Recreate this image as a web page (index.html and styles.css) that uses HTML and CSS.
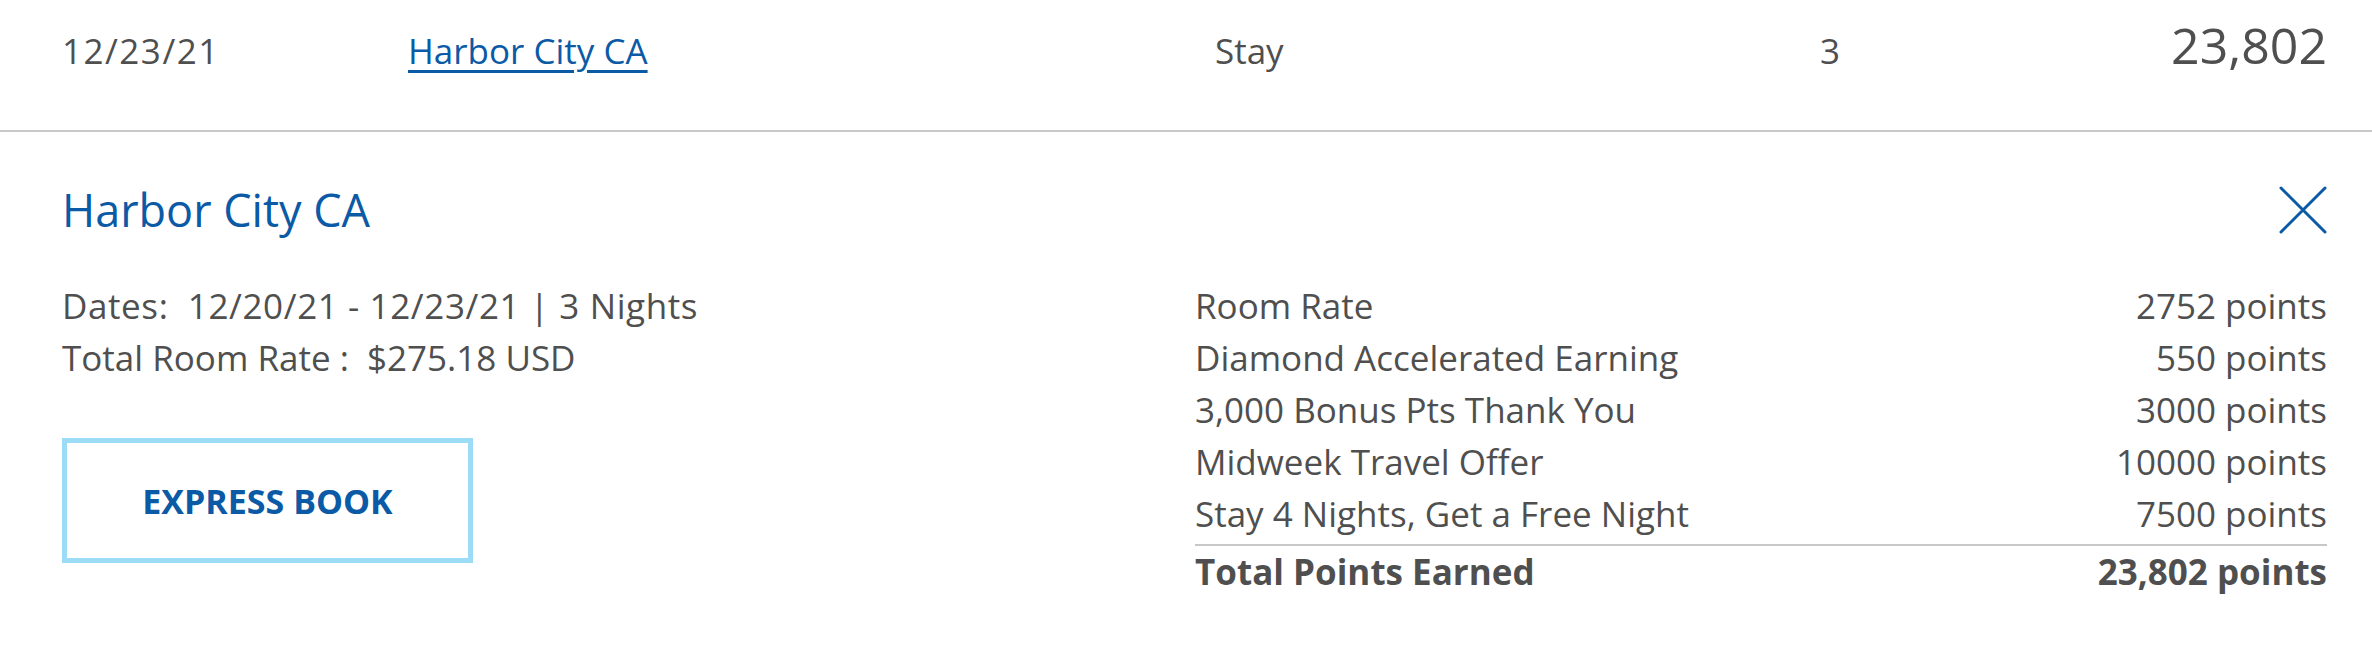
FILE: index.html
```html
<!DOCTYPE html>
<html lang="en">
<head>
    <meta charset="UTF-8">
    <meta name="viewport" content="width=device-width, initial-scale=1.0">
    <title>Stay Activity</title>
    <link rel="stylesheet" href="styles.css">
</head>
<body>
    <div class="activity">
        <div class="activity-row">
            <span class="col-date">12/23/21</span>
            <span class="col-location"><a href="#">Harbor City CA</a></span>
            <span class="col-type">Stay</span>
            <span class="col-nights">3</span>
            <span class="col-points">23,802</span>
        </div>

        <div class="activity-detail">
            <div class="detail-header">
                <h2 class="detail-title">Harbor City CA</h2>
                <button class="close-btn" aria-label="Close">
                    <svg width="48" height="48" viewBox="0 0 48 48">
                        <path d="M2 2 L46 46 M46 2 L2 46" stroke="currentColor" stroke-width="3" stroke-linecap="round" fill="none"/>
                    </svg>
                </button>
            </div>

            <div class="detail-body">
                <div class="stay-info">
                    <p>Dates:&nbsp; 12/20/21 - 12/23/21 | 3 Nights</p>
                    <p>Total Room Rate :&nbsp; $275.18 USD</p>
                    <a class="express-book" href="#">EXPRESS BOOK</a>
                </div>

                <div class="points-breakdown">
                    <div class="points-line">
                        <span>Room Rate</span>
                        <span>2752 points</span>
                    </div>
                    <div class="points-line">
                        <span>Diamond Accelerated Earning</span>
                        <span>550 points</span>
                    </div>
                    <div class="points-line">
                        <span>3,000 Bonus Pts Thank You</span>
                        <span>3000 points</span>
                    </div>
                    <div class="points-line">
                        <span>Midweek Travel Offer</span>
                        <span>10000 points</span>
                    </div>
                    <div class="points-line">
                        <span>Stay 4 Nights, Get a Free Night</span>
                        <span>7500 points</span>
                    </div>
                    <div class="points-line total">
                        <span>Total Points Earned</span>
                        <span>23,802 points</span>
                    </div>
                </div>
            </div>
        </div>
    </div>
</body>
</html>
```

FILE: styles.css
```css
* {
    margin: 0;
    padding: 0;
    box-sizing: border-box;
}

body {
    font-family: 'Open Sans', 'Noto Sans', sans-serif;
    font-size: 35px;
    line-height: 52px;
    color: #4f4f4f;
    background: #fff;
}

a {
    color: #0b5aa6;
}

.activity-row {
    display: grid;
    grid-template-columns: 346px 807px 605px 1fr auto;
    align-items: baseline;
    height: 132px;
    padding: 19px 45px 0 62px;
    border-bottom: 2px solid #c8c8c8;
}

.col-date {
    letter-spacing: 1.5px;
}

.col-location a {
    text-decoration-thickness: 3px;
    text-underline-offset: 6px;
}

.col-points {
    font-size: 50px;
    text-align: right;
}

.activity-detail {
    padding: 48px 45px 40px 62px;
}

.detail-header {
    display: flex;
    justify-content: space-between;
    align-items: center;
    margin-bottom: 40px;
}

.detail-title {
    font-size: 45px;
    line-height: 60px;
    font-weight: 400;
    color: #0b5aa6;
}

.close-btn {
    border: none;
    background: none;
    color: #0b5aa6;
    width: 48px;
    height: 48px;
    cursor: pointer;
}

.close-btn svg {
    display: block;
}

.detail-body {
    display: grid;
    grid-template-columns: 1133px 1fr;
}

.stay-info p:first-child {
    letter-spacing: 0.6px;
}

.express-book {
    display: flex;
    align-items: center;
    justify-content: center;
    width: 411px;
    height: 125px;
    margin-top: 54px;
    border: 5px solid #9cdcf6;
    font-size: 34px;
    font-weight: 700;
    text-decoration: none;
}

.points-line {
    display: flex;
    justify-content: space-between;
}

.points-line.total {
    margin-top: 4px;
    border-top: 2px solid #c8c8c8;
    font-weight: 700;
}
```
